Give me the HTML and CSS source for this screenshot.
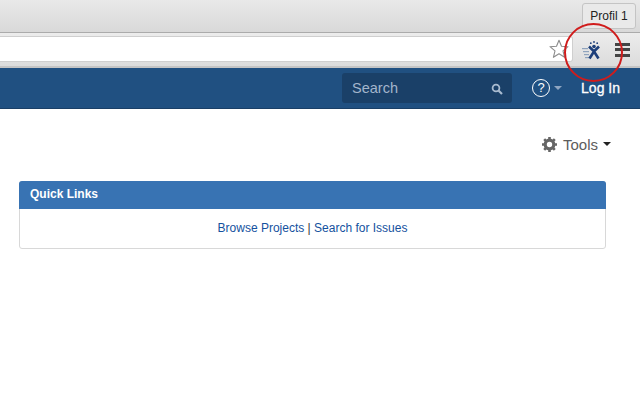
FILE: index.html
```html
<!DOCTYPE html>
<html lang="en">
<head>
<meta charset="utf-8">
<title>Quick Links</title>
<link rel="stylesheet" href="styles.css">
</head>
<body>
<div class="tabbar">
  <div class="profile">Profil 1</div>
</div>
<div class="toolbar">
  <div class="omnibox">
    <svg class="star" width="20" height="20" viewBox="0 0 20 20"><path d="M10 1.2l2.500 6 6.500.5-5 4.200 1.600 6.400L10 14.800l-5.600 3.500L6 11.900 1 7.700l6.500-.5z" fill="#fff" stroke="#8c8c8c" stroke-width="1.100" stroke-linejoin="round"/></svg>
  </div>
  <div class="ext">
    <svg width="24" height="22" viewBox="0 0 24 22">
      <g fill="#8fa3bd"><rect x="1" y="9" width="6" height="1.200"/><rect x="2" y="12" width="6" height="1.200"/><rect x="3" y="15" width="5" height="1.200"/><rect x="4" y="18" width="4" height="1.200"/></g>
      <g fill="#1d3f7a"><circle cx="13" cy="3" r=".9"/><circle cx="9.800" cy="4.200" r=".9"/><circle cx="16.200" cy="4.200" r=".9"/><circle cx="13" cy="7.500" r="1.800"/></g>
      <path d="M8 7.500l5 5 5-5M8.500 19.500l4.500-7 4.500 7" fill="none" stroke="#1d3f7a" stroke-width="2.600"/>
    </svg>
  </div>
  <div class="menu"><span></span><span></span><span></span></div>
</div>
<header class="nav">
  <div class="search">
    <span class="search-text">Search</span>
    <svg width="12" height="12" viewBox="0 0 12 12"><circle cx="5" cy="5" r="3.400" fill="none" stroke="#a9bbd0" stroke-width="1.800"/><path d="M7.500 7.500l3.500 3.500" stroke="#a9bbd0" stroke-width="2.200"/></svg>
  </div>
  <div class="help">
    <span class="help-icon">?</span>
    <span class="help-caret"></span>
  </div>
  <a class="login">Log In</a>
</header>
<main class="content">
  <div class="tools">
    <svg width="17" height="17" viewBox="0 0 17 17"><circle cx="8.500" cy="8.500" r="4.300" fill="none" stroke="#666" stroke-width="3.200"/><path d="M8.500 1v3M8.500 13v3M1 8.500h3M13 8.500h3M3.200 3.200l2.100 2.100M11.700 11.700l2.100 2.100M3.200 13.800l2.100-2.100M11.700 5.300l2.100-2.100" stroke="#666" stroke-width="2.600"/></svg>
    <span class="tools-text">Tools</span>
    <span class="tools-caret"></span>
  </div>
  <section class="panel">
    <h2 class="panel-title">Quick Links</h2>
    <div class="panel-body"><a>Browse Projects</a> | <a>Search for Issues</a></div>
  </section>
</main>
<div class="ring"></div>
</body>
</html>
```
FILE: styles.css
```css
* { box-sizing: border-box; }
html, body { margin: 0; height: 400px; overflow: hidden; background: #fff; }
body { font-family: "Liberation Sans", Arial, sans-serif; position: relative; }

.tabbar {
  height: 33px;
  background: linear-gradient(#e9e9e9, #d9d9d9);
  border-bottom: 1px solid #ababab;
  display: flex;
  justify-content: flex-end;
  align-items: flex-start;
  padding: 3px 4px 0 0;
}
.profile {
  width: 54px;
  height: 26px;
  border: 1px solid #c4c4c4;
  border-radius: 3px;
  background: #e9e9e9;
  color: #222;
  font-size: 12px;
  text-align: center;
  line-height: 24px;
}
.toolbar {
  height: 35px;
  background: linear-gradient(#ececec, #dcdcdc);
  border-bottom: 2px solid #c4c4c4;
  display: flex;
  align-items: center;
}
.omnibox {
  width: 573px;
  height: 26px;
  margin-top: -1px;
  background: #fff;
  border: 1px solid #cfcfcf;
  border-left: 0;
  border-radius: 0 3px 3px 0;
  display: flex;
  justify-content: flex-end;
  align-items: center;
  padding-right: 3px;
}
.ext { margin-left: 8px; width: 24px; height: 22px; }
.ext svg { display: block; }
.menu {
  margin-left: 10px;
  width: 15px;
  display: flex;
  flex-direction: column;
  gap: 2.500px;
}
.menu span { height: 3px; background: #444; }

.nav {
  height: 41px;
  background: #205081;
  border-bottom: 1px solid #1a3f66;
  display: flex;
  align-items: center;
  justify-content: flex-end;
  padding-right: 20px;
}
.search {
  width: 170px;
  height: 30px;
  background: #1a4068;
  border-radius: 3px;
  display: flex;
  align-items: center;
  justify-content: space-between;
  padding: 0 9px 0 10px;
  margin-right: 20px;
}
.search-text { color: #a3b5cc; font-size: 14.500px; }
.search svg { margin-top: 1px; }
.help { display: flex; align-items: center; margin-right: 19px; }
.help-icon {
  width: 18px;
  height: 18px;
  border: 1.500px solid #fff;
  border-radius: 50%;
  color: #fff;
  font-size: 13px;
  line-height: 15px;
  text-align: center;
}
.help-caret {
  margin-left: 4px;
  border: 4px solid transparent;
  border-top-color: #8fa6c2;
  border-bottom: 0;
}
.login { color: #fff; font-size: 14px; -webkit-text-stroke: 0.3px #fff; }

.content { padding: 0 34px 0 19px; }
.tools {
  height: 71px;
  display: flex;
  align-items: center;
  justify-content: flex-end;
  margin-right: -5px;
  margin-bottom: 1px;
  padding-bottom: 1px;
  color: #5c5c5c;
  font-size: 15px;
}
.tools-text { margin-left: 5px; }
.tools-caret {
  margin-left: 5px;
  border: 4px solid transparent;
  border-top-color: #222;
  border-bottom: 0;
}
.panel {
  border: 1px solid #d8d8d8;
  border-radius: 3px;
  height: 68px;
}
.panel-title {
  margin: -1px -1px 0;
  height: 28px;
  background: #3873b3;
  border-radius: 3px 3px 0 0;
  color: #fff;
  font-size: 12px;
  font-weight: bold;
  line-height: 27px;
  padding-left: 11px;
}
.panel-body {
  text-align: center;
  font-size: 12px;
  color: #333;
  padding-top: 12px;
}
.panel-body a { color: #14519e; }

.ring {
  position: absolute;
  left: 564px;
  top: 23px;
  width: 59px;
  height: 59px;
  border: 2px solid #d01c1c;
  border-radius: 50%;
}
```
